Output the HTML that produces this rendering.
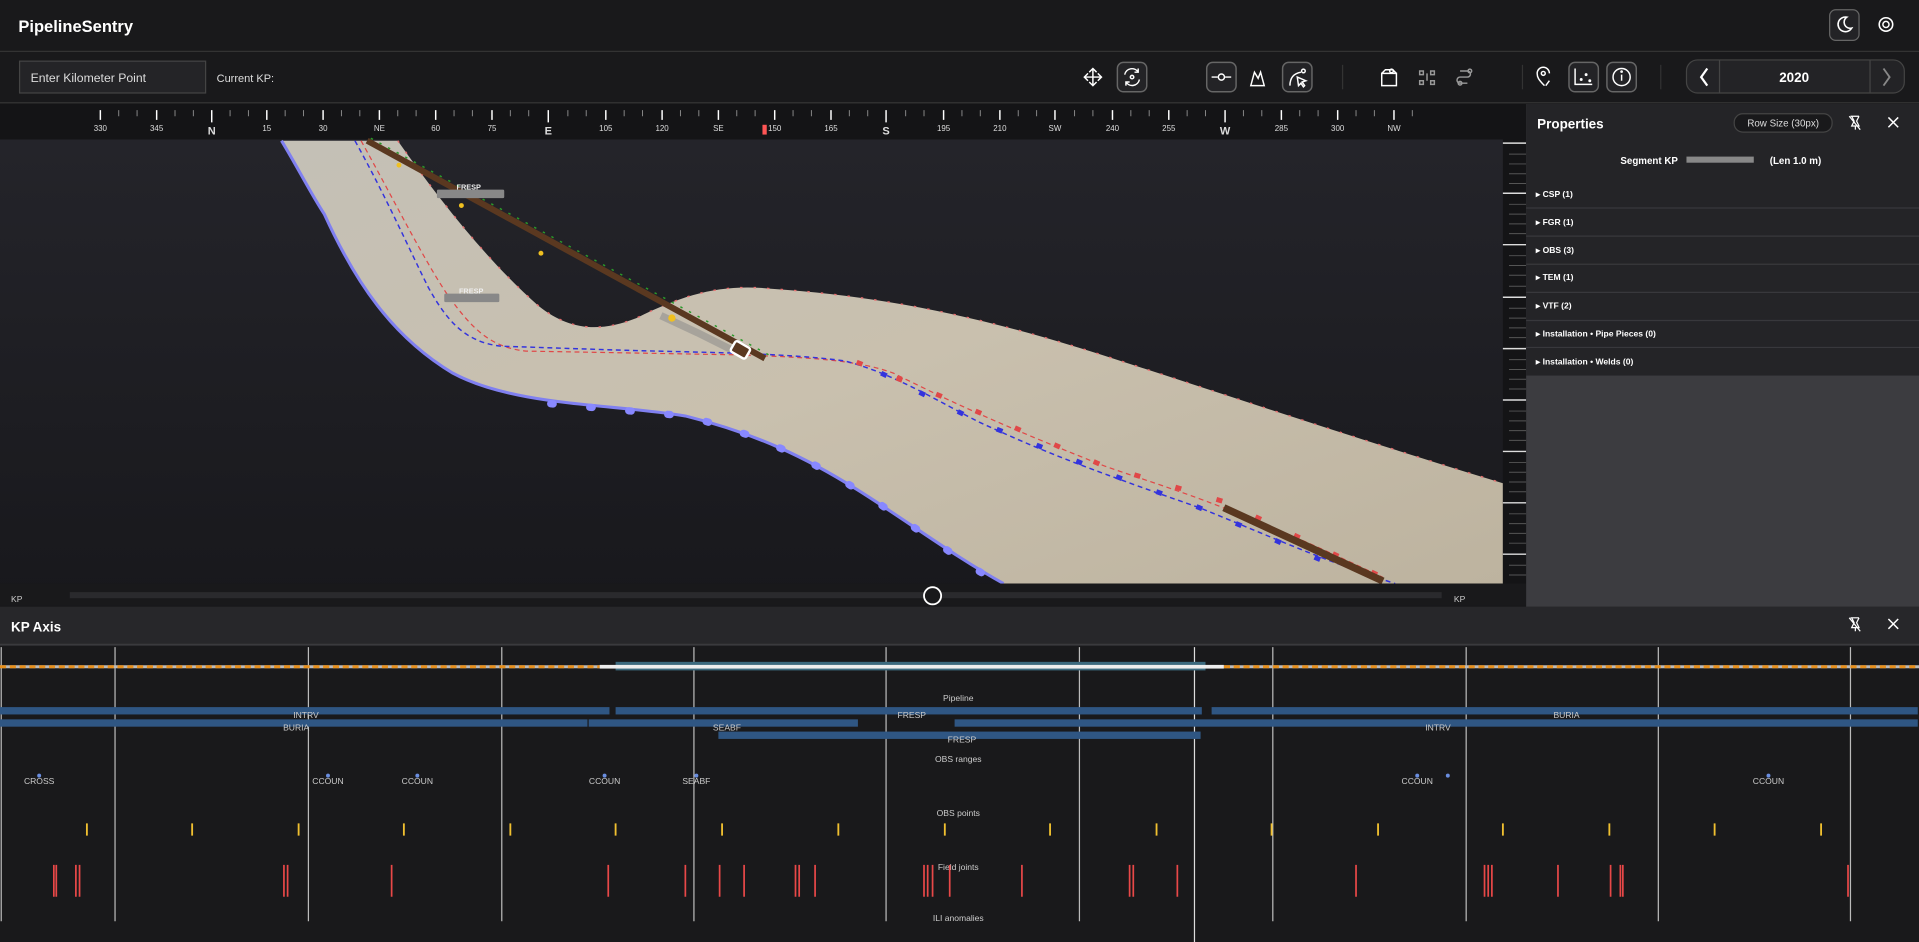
<!DOCTYPE html>
<html><head><meta charset="utf-8"><style>
html,body{margin:0;padding:0;background:#19191b;overflow:hidden}
svg{display:block}
text{font-family:"Liberation Sans",sans-serif}
</style></head><body>
<svg width="1919" height="942" viewBox="0 0 1568 770" preserveAspectRatio="none" xmlns="http://www.w3.org/2000/svg">
<defs>
<linearGradient id="bg3" x1="0" y1="0" x2="0" y2="1"><stop offset="0" stop-color="#25252b"/><stop offset="1" stop-color="#18181c"/></linearGradient>
<linearGradient id="sand" x1="0" y1="0" x2="1" y2="1"><stop offset="0" stop-color="#c4c0b6"/><stop offset="0.5" stop-color="#c9c0ae"/><stop offset="1" stop-color="#bdb39f"/></linearGradient>
</defs>
<rect width="1568" height="770" fill="#19191b"/>
<!-- header -->
<text x="15" y="26" fill="#fff" font-size="13.5" font-weight="bold">PipelineSentry</text>
<rect x="1495" y="8" width="24" height="25" rx="5" fill="#232326" stroke="#666"/>
<path d="M1509 14a6 6 0 1 0 4 9a5 5 0 0 1-4-9z" fill="none" stroke="#fff" stroke-width="1.3"/>
<circle cx="1541" cy="20" r="5.5" fill="none" stroke="#fff" stroke-width="1.3"/><circle cx="1541" cy="20" r="2.5" fill="none" stroke="#fff" stroke-width="1.2"/>
<line x1="0" y1="42" x2="1568" y2="42" stroke="#333"/>
<!-- toolbar -->
<rect x="16" y="50" width="152" height="26" fill="#242427" stroke="#444"/>
<text x="25" y="67" fill="#ddd" font-size="10">Enter Kilometer Point</text>
<text x="177" y="67" fill="#ddd" font-size="9">Current KP:</text>
<g stroke="#fff" fill="none" stroke-width="1.2">
<path d="M893 56v14M886 63h14M890 59l3-3 3 3M890 67l3 3 3-3M889 60l-3 3 3 3M897 60l3 3-3 3"/>
<rect x="913" y="51" width="24" height="24" rx="5" fill="#232326" stroke="#666"/>
<path d="M919 61a6 6 0 0 1 11-2M931 65a6 6 0 0 1-11 2M930 56v3h-3M920 70v-3h3"/><circle cx="925" cy="63" r="1.4"/>
<rect x="986" y="51" width="24" height="24" rx="5" fill="#232326" stroke="#666"/>
<path d="M990 63h5M1001 63h5"/><circle cx="998" cy="63" r="2.5"/>
<path d="M1022 70l3-11 3 5 2-5 3 11z"/>
<rect x="1048" y="51" width="24" height="24" rx="5" fill="#232326" stroke="#666"/>
<path d="M1054 70c0-6 3-10 9-11"/><circle cx="1065" cy="58" r="1.5"/><path d="M1060 63l7 3-3 1 2 3-1 1-2-3-2 2z"/>
<path d="M1129 60h12v10h-12zM1129 60l3-3h6l3 3"/><circle cx="1137" cy="58" r="1.5"/>
<path stroke="#999" d="M1160 58h3v3h-3zM1169 58h3v3h-3zM1160 66h3v3h-3zM1169 66h3v3h-3zM1166 60v6"/>
<path stroke="#999" d="M1193 58h6a2.5 2.5 0 0 1 0 5h-6a2.5 2.5 0 0 0 0 5h6"/><circle stroke="#999" cx="1201" cy="58" r="1.5"/><circle stroke="#999" cx="1193" cy="68" r="1.5"/>
<path d="M1262 70c-5-5-6-7-6-10a5 5 0 0 1 10 0M1266 66l-3 4"/><circle cx="1261" cy="60" r="1.6"/>
<rect x="1282" y="51" width="24" height="24" rx="5" fill="#232326" stroke="#666"/>
<path d="M1287 56v13h14"/><circle cx="1292" cy="65" r=".6"/><circle cx="1296" cy="61" r=".6"/><circle cx="1299" cy="66" r=".6"/>
<rect x="1313" y="51" width="24" height="24" rx="5" fill="#232326" stroke="#666"/>
<circle cx="1325" cy="63" r="7"/><path d="M1325 61v5"/><circle cx="1325" cy="58.5" r=".5"/>
</g>
<line x1="1097" y1="53" x2="1097" y2="73" stroke="#333"/><line x1="1244" y1="53" x2="1244" y2="73" stroke="#333"/><line x1="1357" y1="53" x2="1357" y2="73" stroke="#333"/>
<rect x="1378" y="49" width="178" height="27" rx="9" fill="#232326" stroke="#444"/>
<line x1="1405" y1="49" x2="1405" y2="76" stroke="#444"/><line x1="1528" y1="49" x2="1528" y2="76" stroke="#444"/>
<path d="M1395 56l-5 7 5 7" stroke="#fff" fill="none" stroke-width="1.8"/><path d="M1539 56l5 7-5 7" stroke="#888" fill="none" stroke-width="1.5"/>
<text x="1466" y="67" fill="#fff" font-size="11" font-weight="bold" text-anchor="middle">2020</text>
<line x1="0" y1="84" x2="1568" y2="84" stroke="#333"/>
<!-- 3D view -->
<rect x="0" y="85" width="1247" height="410" fill="url(#bg3)"/>
<rect x="0" y="85" width="1247" height="29" fill="#141416"/>
<g id="compass" fill="#ddd" font-size="6.5" text-anchor="middle">
<g stroke="#fff" stroke-width="1.2">
<path d="M82 90v8M128 90v8M173 90v10M218 90v8M264 90v8M310 90v8M356 90v8M402 90v8M448 90v10M495 90v8M541 90v8M587 90v8M633 90v8M679 90v8M724 90v10M771 90v8M817 90v8M862 90v8M909 90v8M955 90v8M1001 90v10M1047 90v8M1093 90v8M1139 90v8"/>
</g>
<g stroke="#888" stroke-width="0.8">
<path d="M97 90v5M112 90v5M143 90v5M158 90v5M188 90v5M203 90v5M233 90v5M248 90v5M279 90v5M294 90v5M325 90v5M340 90v5M371 90v5M386 90v5M417 90v5M432 90v5M464 90v5M479 90v5M510 90v5M525 90v5M556 90v5M571 90v5M602 90v5M617 90v5M648 90v5M663 90v5M694 90v5M709 90v5M740 90v5M755 90v5M786 90v5M801 90v5M832 90v5M847 90v5M878 90v5M893 90v5M924 90v5M939 90v5M970 90v5M985 90v5M1016 90v5M1031 90v5M1062 90v5M1077 90v5M1108 90v5M1123 90v5M1154 90v5"/>
</g>
<text x="82" y="107">330</text><text x="128" y="107">345</text><text x="173" y="110" font-size="9" font-weight="bold">N</text><text x="218" y="107">15</text><text x="264" y="107">30</text><text x="310" y="107">NE</text><text x="356" y="107">60</text><text x="402" y="107">75</text><text x="448" y="110" font-size="9" font-weight="bold">E</text><text x="495" y="107">105</text><text x="541" y="107">120</text><text x="587" y="107">SE</text><text x="633" y="107">150</text><text x="679" y="107">165</text><text x="724" y="110" font-size="9" font-weight="bold">S</text><text x="771" y="107">195</text><text x="817" y="107">210</text><text x="862" y="107">SW</text><text x="909" y="107">240</text><text x="955" y="107">255</text><text x="1001" y="110" font-size="9" font-weight="bold">W</text><text x="1047" y="107">285</text><text x="1093" y="107">300</text><text x="1139" y="107">NW</text>
<rect x="623" y="102" width="3.5" height="8" fill="#f55"/>
</g>
<!-- terrain -->
<path id="ter" d="M230 115L325 115C360 165 400 215 440 250C465 270 490 272 520 260C560 240 590 232 630 236C720 242 800 258 900 290C1000 322 1100 356 1228 395L1228 477L820 477C780 455 740 425 700 400C660 375 620 355 560 340C500 330 420 332 370 305C320 275 290 230 265 175Z" fill="url(#sand)"/>
<path d="M325 115C360 165 400 215 440 250C465 270 490 272 520 260C560 240 590 232 630 236C720 242 800 258 900 290C1000 322 1100 356 1228 395" fill="none" stroke="#e57070" stroke-width="1.2" stroke-dasharray="2 9"/>
<path d="M230 115C245 140 255 160 265 175C290 230 320 275 370 305C420 332 500 330 560 340C620 355 660 375 700 400C740 425 780 455 820 477" fill="none" stroke="#8080f0" stroke-width="2.5"/>
<path d="M450 330L560 340C620 355 660 375 700 400C740 425 780 455 805 470" fill="none" stroke="#8888ff" stroke-width="6" stroke-dasharray="2 30" stroke-linecap="round"/>
<path d="M540 258L570 272L600 287" stroke="#888" stroke-width="6" opacity=".5"/>
<path d="M295 115C320 160 345 210 365 240C385 268 400 284 430 287L600 290C660 292 700 294 730 305C790 335 830 352 900 380C950 398 1000 410 1130 472" fill="none" stroke="#e04848" stroke-width="1" stroke-dasharray="4 3"/>
<path d="M290 115C315 160 335 205 350 235C365 262 380 280 410 283L500 286C560 288 640 288 690 295C730 305 770 330 800 345C850 368 880 380 980 415C1030 435 1080 458 1140 477" fill="none" stroke="#3333dd" stroke-width="1.2" stroke-dasharray="4 3"/>
<path d="M700 296L760 320L830 350L900 380L1000 410L1130 472" fill="none" stroke="#e04848" stroke-width="4" stroke-dasharray="5 30"/>
<path d="M720 305L800 345L900 385L980 415L1080 458" fill="none" stroke="#3333dd" stroke-width="4" stroke-dasharray="5 30"/>
<path d="M300 115L625 293" stroke="#5a3820" stroke-width="5"/>
<path d="M303 113L628 290" stroke="#2a9a2a" stroke-width="1.2" stroke-dasharray="2 6"/>
<path d="M1000 415L1130 475" stroke="#5a3820" stroke-width="6"/>
<g fill="#f0c020"><circle cx="326" cy="135" r="2"/><circle cx="377" cy="168" r="2"/><circle cx="442" cy="207" r="2"/><circle cx="549" cy="260" r="3"/></g>
<rect x="598" y="281" width="14" height="10" rx="2" transform="rotate(30 605 286)" fill="#5a3820" stroke="#fff" stroke-width="2"/>
<g font-size="6" font-weight="bold" fill="#eee" text-anchor="middle"><rect x="357" y="155" width="55" height="7" fill="#888" rx="1"/><text x="383" y="155">FRESP</text><rect x="363" y="240" width="45" height="7" fill="#888" rx="1"/><text x="385" y="240">FRESP</text></g>
<!-- right ruler -->
<rect x="1228" y="114" width="19" height="381" fill="#141416"/>
<path d="M1228 117h19M1228 158h19M1228 200h19M1228 243h19M1228 285h19M1228 327h19M1228 369h19M1228 411h19M1228 453h19" stroke="#ddd" stroke-width="1.2"/>
<path d="M1233 126h14M1233 134h14M1233 142h14M1233 150h14M1233 167h14M1233 175h14M1233 183h14M1233 191h14M1233 209h14M1233 217h14M1233 225h14M1233 234h14M1233 252h14M1233 260h14M1233 268h14M1233 276h14M1233 294h14M1233 302h14M1233 310h14M1233 318h14M1233 336h14M1233 344h14M1233 352h14M1233 360h14M1233 378h14M1233 386h14M1233 394h14M1233 402h14M1233 420h14M1233 428h14M1233 436h14M1233 444h14M1233 462h14M1233 470h14" stroke="#555" stroke-width="0.8"/>
<!-- slider -->
<rect x="0" y="477" width="1247" height="18" fill="#19191b"/>
<rect x="57" y="484" width="1121" height="5" fill="#2a2a2d"/>
<circle cx="762" cy="487" r="7" fill="#19191b" stroke="#fff" stroke-width="1.5"/>
<text x="9" y="492" fill="#ccc" font-size="7">KP</text><text x="1188" y="492" fill="#ccc" font-size="7">KP</text>
<!-- properties -->
<rect x="1247" y="85" width="321" height="411" fill="#3c3c40"/>
<rect x="1247" y="85" width="321" height="222" fill="#242427"/>
<text x="1256" y="105" fill="#fff" font-size="11" font-weight="bold">Properties</text>
<rect x="1417" y="93" width="80" height="15" rx="7" fill="#19191b" stroke="#444"/>
<text x="1457" y="103.5" fill="#ddd" font-size="8" text-anchor="middle">Row Size (30px)</text>
<path d="M1512 95h7M1513 95l2 4-2 4h6l-2-4 2-4M1516 103v3M1511 95l9 11" stroke="#fff" fill="none" stroke-width="1"/>
<path d="M1543 96l8 8M1551 96l-8 8" stroke="#fff" stroke-width="1.2"/>
<text x="1324" y="134" fill="#fff" font-size="8" font-weight="bold">Segment KP</text>
<rect x="1378" y="128" width="55" height="5" fill="#888"/>
<text x="1446" y="134" fill="#fff" font-size="8" font-weight="bold">(Len 1.0 m)</text>
<g fill="#fff" font-size="7" font-weight="bold">
<text x="1255" y="161">▸ CSP (1)</text><text x="1255" y="184">▸ FGR (1)</text><text x="1255" y="207">▸ OBS (3)</text><text x="1255" y="229">▸ TEM (1)</text><text x="1255" y="252">▸ VTF (2)</text><text x="1255" y="275">▸ Installation • Pipe Pieces (0)</text><text x="1255" y="298">▸ Installation • Welds (0)</text>
</g>
<path d="M1247 170h321M1247 193h321M1247 216h321M1247 239h321M1247 262h321M1247 284h321" stroke="#38383c"/>
<!-- KP axis header -->
<rect x="0" y="496" width="1568" height="31" fill="#27272a"/>
<line x1="0" y1="527" x2="1568" y2="527" stroke="#3a3a3d" stroke-width="1.5"/>
<text x="9" y="516" fill="#fff" font-size="11" font-weight="bold">KP Axis</text>
<path d="M1512 505h7M1513 505l2 4-2 4h6l-2-4 2-4M1516 513v3M1511 505l9 11" stroke="#fff" fill="none" stroke-width="1"/>
<path d="M1543 506l8 8M1551 506l-8 8" stroke="#fff" stroke-width="1.2"/>
<!-- chart -->
<g stroke="#bbb" stroke-width="1">
<path d="M1 529v224M94 529v224M252 529v224M410 529v224M567 529v224M724 529v224M882 529v224M1040 529v224M1198 529v224M1355 529v224M1512 529v224"/>
<path d="M976 529v241" stroke="#ddd"/>
</g>
<rect x="503" y="541" width="482" height="7" fill="#3c6a7e"/>
<path d="M0 545H490M1000 545H1568" stroke="#bbb" stroke-width="2.5"/>
<path d="M0 545H490M1000 545H1568" stroke="#e8901c" stroke-width="2.5" stroke-dasharray="5 3"/>
<rect x="490" y="543.5" width="510" height="3" fill="#eee"/>
<g fill="#2f5683">
<rect x="0" y="578" width="498" height="6"/><rect x="503" y="578" width="479" height="6"/><rect x="990" y="578" width="577" height="6"/>
<rect x="0" y="588" width="480" height="6"/><rect x="481" y="588" width="220" height="6"/><rect x="780" y="588" width="787" height="6"/>
<rect x="587" y="598" width="394" height="6"/>
</g>
<g fill="#ccc" font-size="7" text-anchor="middle">
<text x="783" y="573">Pipeline</text><text x="250" y="587">INTRV</text><text x="745" y="587">FRESP</text><text x="1280" y="587">BURIA</text>
<text x="242" y="597">BURIA</text><text x="594" y="597">SEABF</text><text x="1175" y="597">INTRV</text><text x="786" y="607">FRESP</text>
<text x="783" y="623">OBS ranges</text><text x="783" y="667">OBS points</text><text x="783" y="711">Field joints</text><text x="783" y="753">ILI anomalies</text>
<text x="32" y="641">CROSS</text><text x="268" y="641">CCOUN</text><text x="341" y="641">CCOUN</text><text x="494" y="641">CCOUN</text><text x="569" y="641">SEABF</text><text x="1158" y="641">CCOUN</text><text x="1445" y="641">CCOUN</text>
</g>
<g fill="#6a8ee0"><circle cx="32" cy="634" r="1.6"/><circle cx="268" cy="634" r="1.6"/><circle cx="341" cy="634" r="1.6"/><circle cx="494" cy="634" r="1.6"/><circle cx="569" cy="634" r="1.6"/><circle cx="1158" cy="634" r="1.6"/><circle cx="1183" cy="634" r="1.6"/><circle cx="1445" cy="634" r="1.6"/></g>
<path d="M71 673v10M157 673v10M244 673v10M330 673v10M417 673v10M503 673v10M590 673v10M685 673v10M772 673v10M858 673v10M945 673v10M1039 673v10M1126 673v10M1228 673v10M1315 673v10M1401 673v10M1488 673v10" stroke="#f0c030" stroke-width="1.5"/>
<path d="M44 707v26M46 707v26M62 707v26M65 707v26M232 707v26M235 707v26M320 707v26M497 707v26M560 707v26M588 707v26M608 707v26M650 707v26M653 707v26M666 707v26M755 707v26M758 707v26M762 707v26M776 707v26M835 707v26M923 707v26M926 707v26M962 707v26M1108 707v26M1213 707v26M1216 707v26M1219 707v26M1273 707v26M1316 707v26M1324 707v26M1326 707v26M1510 707v26" stroke="#e84848" stroke-width="1.4"/>
</svg>
</body></html>
